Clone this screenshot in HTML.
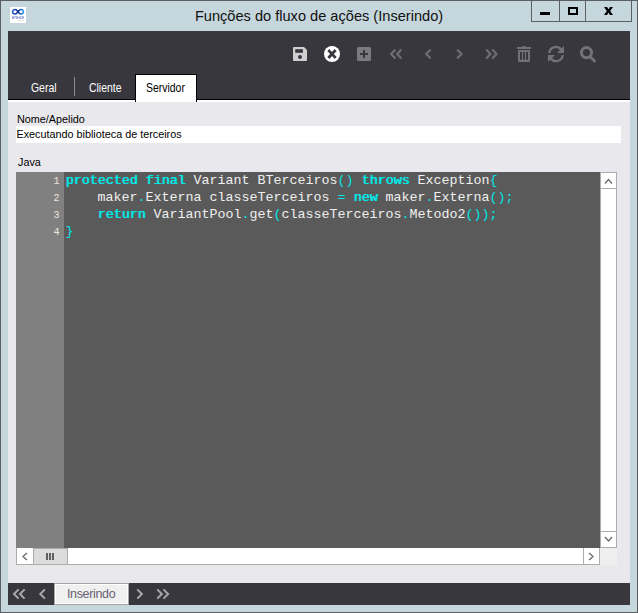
<!DOCTYPE html>
<html><head><meta charset="utf-8">
<style>
*{margin:0;padding:0;box-sizing:border-box}
html,body{width:638px;height:613px;overflow:hidden}
body{background:#5b5f63;position:relative;font-family:"Liberation Sans",sans-serif}
.abs{position:absolute}
#frame{left:1px;top:1px;width:636px;height:611px;background:#c5d7dd}
#title{left:0;top:7px;width:638px;text-align:center;font-size:14.6px;color:#111;white-space:nowrap;line-height:18px}
.wb{top:0;height:22px;border:1px solid #5b5f63;background:#c5d7dd}
#toolbar{left:8px;top:31px;width:622px;height:69px;background:#38373d;border-bottom:1px solid #000}
#content{left:8px;top:100px;width:622px;height:483px;background:#e9e8ed;border-top:2px solid #fff}
#bottombar{left:8px;top:583px;width:622px;height:22px;background:#38373d}
.tab{top:0;font-size:12px;transform:scaleX(0.87);transform-origin:0 0;color:#fff;white-space:nowrap}
.lbl{font-size:10.8px;color:#000;white-space:nowrap}
#code{left:16px;top:172px;width:584px;height:376px;background:#5a5a5a}
#gutter{left:16px;top:172px;width:48px;height:376px;background:#808080}
.ln{left:16px;width:43.5px;text-align:right;font-family:"Liberation Mono",monospace;font-size:10px;color:#ece6dc}
.cl{left:65.6px;font-family:"Liberation Mono",monospace;font-size:13.333px;color:#f0f0f0;white-space:pre;line-height:17px}
.k{color:#00e8e8;font-weight:normal;text-shadow:0.6px 0 0 #00e8e8}
.p{color:#00e8e8}
</style></head><body>
<div id="frame" class="abs"></div>
<!-- app icon -->
<div class="abs" style="left:10px;top:7px;width:16px;height:16px;background:#fff">
<svg width="16" height="16" viewBox="0 0 16 16" style="position:absolute;left:0;top:0">
<defs><linearGradient id="ig" x1="0" x2="1" y1="0" y2="0"><stop offset="0" stop-color="#1f5fd0"/><stop offset="0.5" stop-color="#1a2c90"/><stop offset="1" stop-color="#2f9ef0"/></linearGradient></defs>
<path d="M5.2 2.55C3.4 2.55 2.55 3.6 2.55 4.8C2.55 6 3.4 7.05 5.2 7.05C6.4 7.05 7.1 6 8 4.8C8.9 3.6 9.6 2.55 10.8 2.55C12.6 2.55 13.45 3.6 13.45 4.8C13.45 6 12.6 7.05 10.8 7.05C9.6 7.05 8.9 6 8 4.8C7.1 3.6 6.4 2.55 5.2 2.55Z" fill="none" stroke="url(#ig)" stroke-width="1.6"/>
<g fill="#4a5cb8" opacity="0.85">
<rect x="2" y="9.3" width="0.6" height="2.6"/><rect x="2.6" y="9.6" width="0.7" height="0.7"/><rect x="3.3" y="9.3" width="0.6" height="2.6"/>
<rect x="4.6" y="9.3" width="0.6" height="2.6"/><rect x="5.2" y="9.3" width="0.9" height="0.7"/><rect x="6.1" y="9.3" width="0.6" height="2.6"/>
<rect x="7.4" y="9.3" width="0.6" height="2.6"/><rect x="8" y="10.3" width="1" height="0.7"/><rect x="9" y="9.3" width="0.5" height="2.6"/>
<rect x="10.2" y="9.3" width="0.6" height="2.6"/><rect x="10.8" y="9.3" width="0.9" height="0.6"/><rect x="10.8" y="11.3" width="0.9" height="0.6"/>
<rect x="12.3" y="9.3" width="0.6" height="2.6"/><rect x="12.9" y="9.3" width="0.9" height="0.6"/><rect x="13.3" y="9.9" width="0.5" height="2"/>
</g>
<rect x="8.5" y="13.2" width="5" height="0.6" fill="#b8b0a0" opacity="0.6"/>
</svg>
</div>
<div id="title" class="abs">Funções do fluxo de ações (Inserindo)</div>
<!-- window buttons -->
<div class="abs wb" style="left:531px;width:29px"></div>
<div class="abs wb" style="left:559px;width:27px"></div>
<div class="abs wb" style="left:585px;width:47px"></div>
<div class="abs" style="left:540px;top:12px;width:10px;height:3px;background:#000"></div>
<div class="abs" style="left:568px;top:7px;width:10px;height:8px;border:2px solid #000"></div>
<svg class="abs" style="left:604px;top:7px" width="9" height="8" viewBox="0 0 9 8">
<path d="M0 0H3L4.5 2.2L6 0H9L6.2 4L9 8H6L4.5 5.8L3 8H0L2.8 4Z" fill="#000"/>
</svg>

<div id="toolbar" class="abs"></div>
<div id="content" class="abs"></div>
<div id="bottombar" class="abs"></div>


<!-- toolbar icons -->
<svg class="abs" style="left:0;top:0" width="638" height="100">
<path d="M294 47H304L307 50V60Q307 61 306 61H294Q293 61 293 60V48Q293 47 294 47Z" fill="#cfcfcf"/>
<rect x="295.2" y="49.2" width="7.7" height="3.6" fill="#38373d"/>
<circle cx="300" cy="57" r="2" fill="#38373d"/>
<circle cx="332" cy="54" r="8" fill="#fff"/>
<path d="M329.3 51.1L334.7 56.9M334.7 51.1L329.3 56.9" stroke="#38373d" stroke-width="2.8" stroke-linecap="square"/>
<rect x="357" y="47" width="14" height="14" rx="1.5" fill="#7b7a7f"/>
<path d="M360 54H368M364 50V58" stroke="#38373d" stroke-width="2"/>
<g fill="none" stroke="#6e6d72" stroke-width="2.3" stroke-linecap="round" stroke-linejoin="round">
<path d="M394.7 50.2L391.1 54L394.7 57.8M400.7 50.2L397.1 54L400.7 57.8"/>
<path d="M430 50.3L426.2 54L430 57.7"/>
<path d="M457.8 50.3L461.6 54L457.8 57.7"/>
<path d="M486.9 50.2L490.5 54L486.9 57.8M492.9 50.2L496.5 54L492.9 57.8"/>
</g>
<g fill="#737277">
<path d="M521.5 47Q522 46 524 46Q526 46 526.7 47Z"/>
<rect x="517" y="47" width="14" height="2"/>
<path d="M518 50H530V61Q530 62 529 62H519Q518 62 518 61Z"/>
</g>
<g fill="#38373d"><rect x="520" y="52" width="2" height="7.8"/><rect x="523.2" y="52" width="1.8" height="7.8"/><rect x="526.1" y="52" width="1.9" height="7.8"/></g>
<g fill="none" stroke="#737277" stroke-width="2.4">
<path d="M549.2 53A6.7 6.7 0 0 1 561.5 50"/>
<path d="M562.8 55A6.7 6.7 0 0 1 550.5 58"/>
</g>
<g fill="#737277">
<path d="M564 46V53H557Z"/>
<path d="M548 55H555L548 62Z"/>
</g>
<g fill="none" stroke="#737277" stroke-width="3" stroke-linecap="round">
<circle cx="586.5" cy="52.6" r="5.1"/>
<path d="M590.5 57L594.5 61"/>
</g>
</svg>
<!-- bottom arrows -->
<svg class="abs" style="left:0;top:580px" width="200" height="30">
<g fill="none" stroke="#a9a9a9" stroke-width="2" stroke-linecap="square">
<path d="M17.9 10.1L14 14L17.9 17.9M23.9 10.1L20 14L23.9 17.9"/>
<path d="M44.2 10.1L40.3 14L44.2 17.9"/>
<path d="M138 10.1L141.9 14L138 17.9"/>
<path d="M158 10.1L161.9 14L158 17.9M164.2 10.1L168.1 14L164.2 17.9"/>
</g>
</svg>

<!-- tabs -->
<div class="abs" style="left:74px;top:77px;width:1px;height:19px;background:#8c8b90"></div>
<div class="abs" style="left:135px;top:74px;width:62px;height:28px;background:#fff;border:1px solid #000;border-bottom:none"></div>
<div class="abs tab" style="left:31px;top:81px">Geral</div>
<div class="abs tab" style="left:89px;top:81px">Cliente</div>
<div class="abs tab" style="left:146px;top:81px;color:#000">Servidor</div>
<!-- fields -->
<div class="abs lbl" style="left:17px;top:113px">Nome/Apelido</div>
<div class="abs" style="left:16px;top:126px;width:605px;height:17px;background:#fff"></div>
<div class="abs lbl" style="left:16.5px;top:128px">Executando biblioteca de terceiros</div>
<div class="abs lbl" style="left:18px;top:156px">Java</div>
<!-- editor -->
<div id="code" class="abs"></div>
<div id="gutter" class="abs"></div>
<div class="abs ln" style="top:175.5px">1</div>
<div class="abs ln" style="top:192.5px">2</div>
<div class="abs ln" style="top:209.5px">3</div>
<div class="abs ln" style="top:226.5px">4</div>
<div class="abs cl" style="top:172px"><span class="k">protected</span> <span class="k">final</span> Variant BTerceiros<span class="p">()</span> <span class="k">throws</span> Exception<span class="p">{</span></div>
<div class="abs cl" style="top:189px">    maker<span class="p">.</span>Externa classeTerceiros <span class="p">=</span> <span class="k">new</span> maker<span class="p">.</span>Externa<span class="p">();</span></div>
<div class="abs cl" style="top:206px">    <span class="k">return</span> VariantPool<span class="p">.</span>get<span class="p">(</span>classeTerceiros<span class="p">.</span>Metodo2<span class="p">());</span></div>
<div class="abs cl" style="top:223px"><span class="p">}</span></div>
<!-- vertical scrollbar -->
<div class="abs" style="left:600px;top:172px;width:17px;height:376px;background:#fff;border:1px solid #acacac"></div>
<div class="abs" style="left:600px;top:188px;width:17px;height:1px;background:#acacac"></div>
<div class="abs" style="left:600px;top:531px;width:17px;height:1px;background:#acacac"></div>
<svg class="abs" style="left:600px;top:172px" width="17" height="17"><path d="M5 11.5L8.5 7.5L12 11.5" fill="none" stroke="#6a6a6a" stroke-width="1.3"/></svg>
<svg class="abs" style="left:600px;top:531px" width="17" height="17"><path d="M5 6L8.5 10L12 6" fill="none" stroke="#6a6a6a" stroke-width="1.3"/></svg>
<!-- horizontal scrollbar -->
<div class="abs" style="left:16px;top:548px;width:584px;height:17px;background:#fff;border:1px solid #acacac;border-top:none"></div>
<div class="abs" style="left:33px;top:548px;width:35px;height:17px;background:#dcdcdc;border:1px solid #acacac"></div>
<div class="abs" style="left:583px;top:548px;width:1px;height:17px;background:#acacac"></div>
<div class="abs" style="left:46px;top:553px;width:2px;height:7px;background:#606060"></div>
<div class="abs" style="left:49px;top:553px;width:2px;height:7px;background:#606060"></div>
<div class="abs" style="left:52px;top:553px;width:2px;height:7px;background:#606060"></div>
<svg class="abs" style="left:16px;top:548px" width="17" height="17"><path d="M11 5L7 8.5L11 12" fill="none" stroke="#6a6a6a" stroke-width="1.3"/></svg>
<svg class="abs" style="left:583px;top:548px" width="17" height="17"><path d="M6 5L10 8.5L6 12" fill="none" stroke="#6a6a6a" stroke-width="1.3"/></svg>
<div class="abs" style="left:600px;top:548px;width:17px;height:17px;background:#efefef"></div>
<!-- bottom bar -->
<div class="abs" style="left:54px;top:583px;width:75px;height:22px;background:#f0f0f0;border:1px solid #a4a4a4;box-shadow:inset 1px 1px 0 #fff,inset -1px -1px 0 #fff"></div>
<div class="abs" style="left:67px;top:587px;font-size:12.5px;letter-spacing:-0.35px;color:#686070;white-space:nowrap">Inserindo</div>

</body></html>
